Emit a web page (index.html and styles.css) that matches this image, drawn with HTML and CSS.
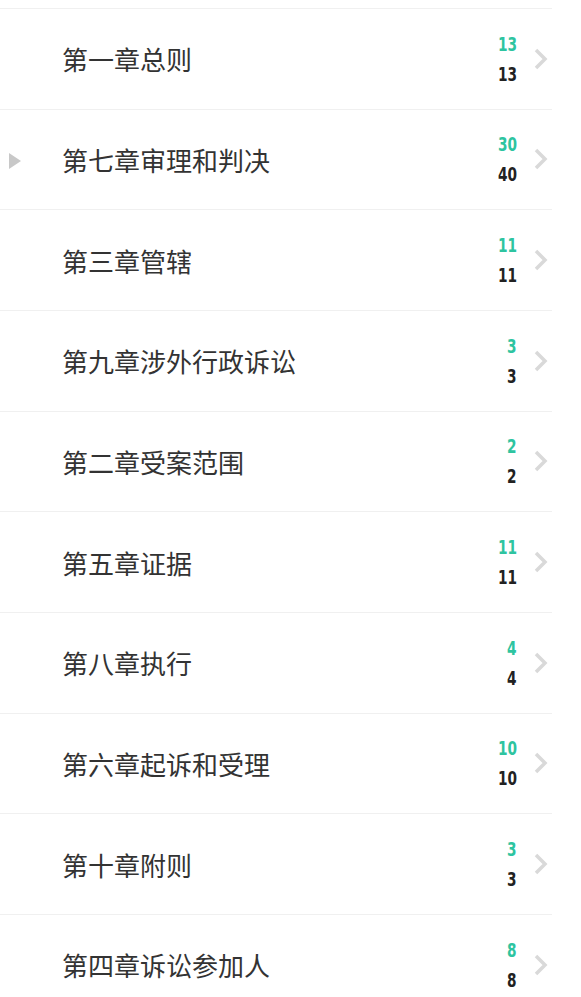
FILE: index.html
```html
<!DOCTYPE html>
<html lang="zh">
<head>
    <meta charset="UTF-8">
    <meta name="viewport" content="width=device-width, initial-scale=1.0">
    <title>章节列表</title>
    <link rel="stylesheet" href="styles.css">
</head>
<body>
    <div class="list">
        <div class="row">
            <span class="title">第一章总则</span>
            <div class="counts"><span class="done">13</span><span class="total">13</span></div>
            <svg class="chevron" viewBox="0 0 14 22"><path d="M2 2 L11 11 L2 20"/></svg>
        </div>
        <div class="row">
            <svg class="play" viewBox="0 0 12 16"><path d="M0 0 L12 8 L0 16 Z"/></svg>
            <span class="title">第七章审理和判决</span>
            <div class="counts"><span class="done">30</span><span class="total">40</span></div>
            <svg class="chevron" viewBox="0 0 14 22"><path d="M2 2 L11 11 L2 20"/></svg>
        </div>
        <div class="row">
            <span class="title">第三章管辖</span>
            <div class="counts"><span class="done">11</span><span class="total">11</span></div>
            <svg class="chevron" viewBox="0 0 14 22"><path d="M2 2 L11 11 L2 20"/></svg>
        </div>
        <div class="row">
            <span class="title">第九章涉外行政诉讼</span>
            <div class="counts"><span class="done">3</span><span class="total">3</span></div>
            <svg class="chevron" viewBox="0 0 14 22"><path d="M2 2 L11 11 L2 20"/></svg>
        </div>
        <div class="row">
            <span class="title">第二章受案范围</span>
            <div class="counts"><span class="done">2</span><span class="total">2</span></div>
            <svg class="chevron" viewBox="0 0 14 22"><path d="M2 2 L11 11 L2 20"/></svg>
        </div>
        <div class="row">
            <span class="title">第五章证据</span>
            <div class="counts"><span class="done">11</span><span class="total">11</span></div>
            <svg class="chevron" viewBox="0 0 14 22"><path d="M2 2 L11 11 L2 20"/></svg>
        </div>
        <div class="row">
            <span class="title">第八章执行</span>
            <div class="counts"><span class="done">4</span><span class="total">4</span></div>
            <svg class="chevron" viewBox="0 0 14 22"><path d="M2 2 L11 11 L2 20"/></svg>
        </div>
        <div class="row">
            <span class="title">第六章起诉和受理</span>
            <div class="counts"><span class="done">10</span><span class="total">10</span></div>
            <svg class="chevron" viewBox="0 0 14 22"><path d="M2 2 L11 11 L2 20"/></svg>
        </div>
        <div class="row">
            <span class="title">第十章附则</span>
            <div class="counts"><span class="done">3</span><span class="total">3</span></div>
            <svg class="chevron" viewBox="0 0 14 22"><path d="M2 2 L11 11 L2 20"/></svg>
        </div>
        <div class="row">
            <span class="title">第四章诉讼参加人</span>
            <div class="counts"><span class="done">8</span><span class="total">8</span></div>
            <svg class="chevron" viewBox="0 0 14 22"><path d="M2 2 L11 11 L2 20"/></svg>
        </div>
    </div>
</body>
</html>
```

FILE: styles.css
```css
body {
    margin: 0;
    padding: 0;
    background-color: #fff;
    font-family: "Noto Sans CJK SC", "Noto Sans", sans-serif;
    overflow: hidden;
}
.list {
    padding-top: 8px;
    height: 989px;
    border-bottom: 1px solid #e6e6e6;
}
.row {
    position: relative;
    display: flex;
    align-items: center;
    box-sizing: border-box;
    height: 100.67px;
    width: 552px;
    border-top: 1px solid #f0f0f0;
    padding-left: 62px;
}
.title {
    flex: 1;
    font-size: 26px;
    color: #333;
}
.counts {
    display: flex;
    flex-direction: column;
    align-items: flex-end;
    font-family: "DejaVu Sans Condensed", "DejaVu Sans", sans-serif;
    font-stretch: condensed;
    font-weight: bold;
    font-size: 20px;
    line-height: 30px;
    transform: scaleX(0.76);
    transform-origin: right center;
}
.done {
    color: #2ec4a0;
}
.total {
    color: #222;
}
.chevron {
    width: 14px;
    height: 22px;
    margin-left: 17px;
    margin-right: 4px;
    fill: none;
    stroke: #d9d9d9;
    stroke-width: 3.5;
}
.play {
    position: absolute;
    left: 9px;
    top: 43px;
    width: 12px;
    height: 16px;
    fill: #c8c8c8;
}
```
